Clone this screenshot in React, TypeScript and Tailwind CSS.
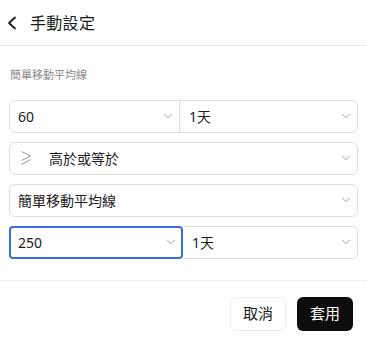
import { ChevronDown } from 'lucide-react';

function GteIcon() {
  return (
    <svg width="12" height="16" viewBox="0 0 12 16" fill="none" stroke="#999999" strokeWidth="1">
      <path d="M1.5 1.5 L10.5 6 L1.5 10.5" />
      <path d="M1.5 14.5 L10.5 9.5" />
    </svg>
  );
}

function BackIcon() {
  return (
    <svg width="10" height="14" viewBox="0 0 10 14" fill="none" stroke="#1a1a1a" strokeWidth="1.8" strokeLinecap="round" strokeLinejoin="round">
      <path d="M8 1.5 L2 7 L8 12.5" />
    </svg>
  );
}

function Chevron() {
  return <ChevronDown className="h-[14px] w-[14px] text-[#9a9a9a]" strokeWidth={1.6} />;
}

export default function App() {
  return (
    <div
      className="h-[342px] w-[367px] bg-white text-[#1a1a1a]"
      style={{ fontFamily: '"Noto Sans", "Noto Sans CJK TC", sans-serif' }}
    >
      <div className="flex h-[46px] items-center gap-[13px] border-b border-[#ececec] pl-[7px]">
        <BackIcon />
        <h1 className="text-[16px] font-normal tracking-[0.3px]">手動設定</h1>
      </div>

      <div className="px-[9px] pt-[21px]">
        <p className="mb-[16px] pl-[1px] text-[11px] text-[#8a8a8a]">簡單移動平均線</p>

        <div className="flex h-[33px]">
          <div className="flex w-[171px] items-center justify-between rounded-l-[6px] border border-[#dedede] pl-[8px] pr-[4px] text-[14px]">
            <span>60</span>
            <Chevron />
          </div>
          <div className="flex flex-1 items-center justify-between rounded-r-[6px] border border-l-0 border-[#dedede] pl-[9px] pr-[4px] text-[14px]">
            <span>1天</span>
            <Chevron />
          </div>
        </div>

        <div className="mt-[9px] flex h-[33px] items-center justify-between rounded-[6px] border border-[#dedede] pl-[10px] pr-[4px] text-[14px]">
          <div className="flex items-center gap-[17px]">
            <GteIcon />
            <span>高於或等於</span>
          </div>
          <Chevron />
        </div>

        <div className="mt-[9px] flex h-[33px] items-center justify-between rounded-[6px] border border-[#dedede] pl-[8px] pr-[4px] text-[14px]">
          <span>簡單移動平均線</span>
          <Chevron />
        </div>

        <div className="mt-[9px] flex h-[33px]">
          <div className="flex w-[174px] items-center justify-between rounded-[4px] border-2 border-[#3a6fd8] pl-[7px] pr-[3px] text-[14px]">
            <span>250</span>
            <Chevron />
          </div>
          <div className="flex flex-1 items-center justify-between rounded-r-[6px] border border-l-0 border-[#dedede] pl-[9px] pr-[4px] text-[14px]">
            <span>1天</span>
            <Chevron />
          </div>
        </div>
      </div>

      <div className="mt-[21px] flex justify-end gap-[11px] border-t border-[#ececec] pr-[14px] pt-[16px]">
        <button className="h-[34px] w-[56px] rounded-[6px] border border-[#ececec] bg-white text-[15px] text-[#1a1a1a]">
          取消
        </button>
        <button className="h-[34px] w-[56px] rounded-[6px] bg-[#0d0d0d] text-[15px] text-white">
          套用
        </button>
      </div>
    </div>
  );
}
